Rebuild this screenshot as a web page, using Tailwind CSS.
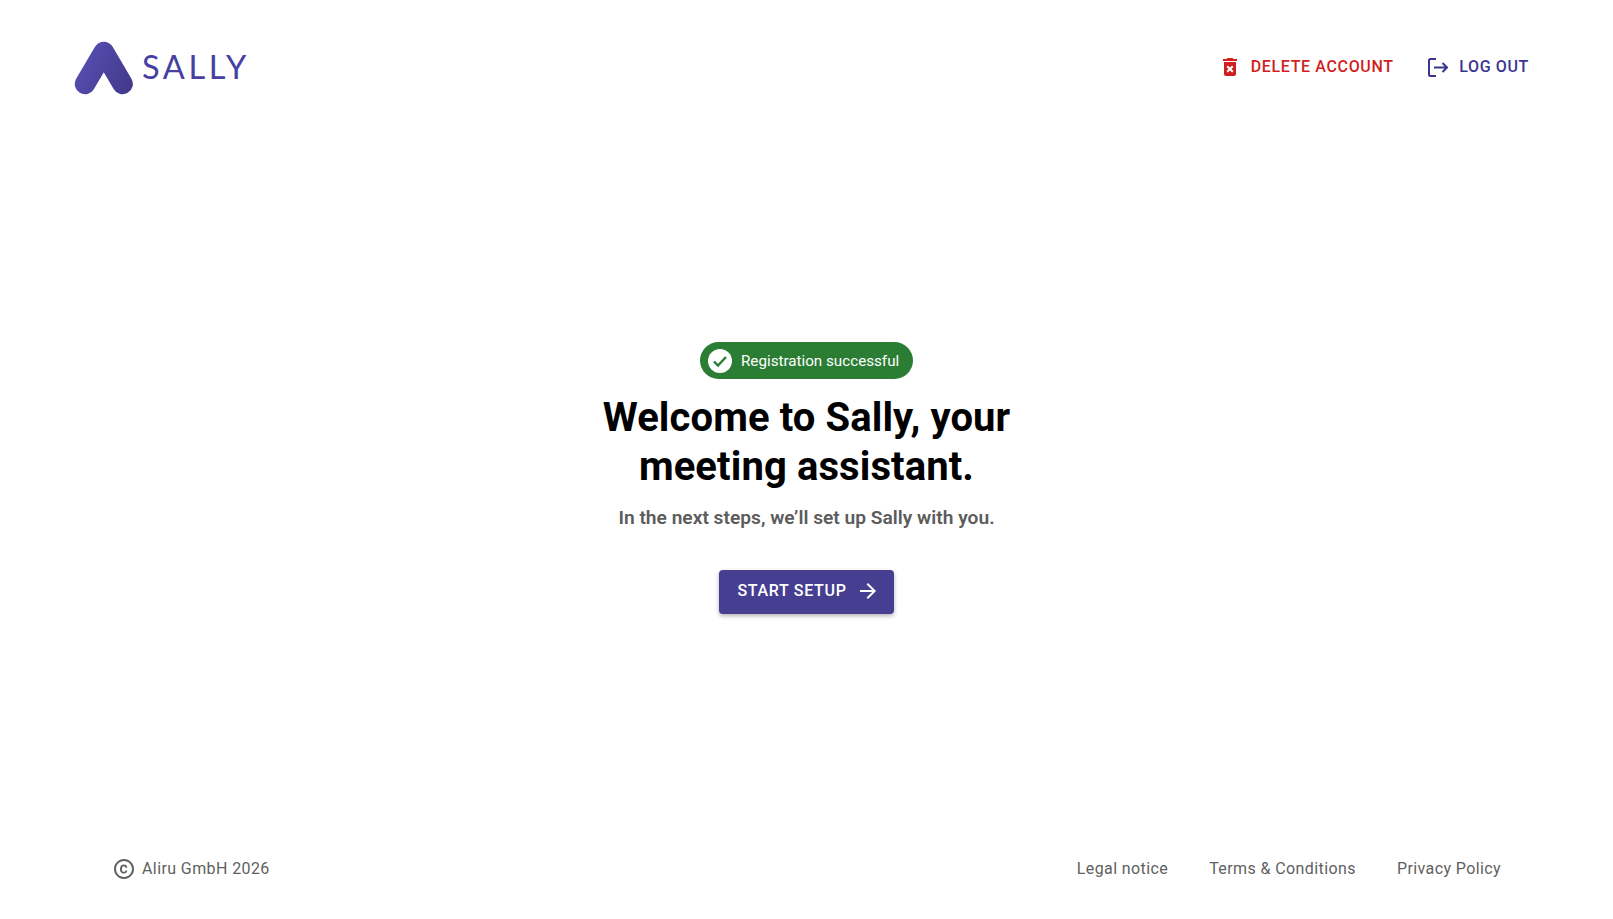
<!DOCTYPE html>
<html lang="en">
<head>
<meta charset="utf-8">
<title>Sally</title>
<script src="https://cdn.jsdelivr.net/npm/@tailwindcss/browser@4"></script>
</head>
<body class="bg-white font-['Roboto',sans-serif]">
<div class="flex flex-col h-[919px] w-full overflow-hidden">
  <header class="flex items-start justify-between pl-[74px] pr-[84px] pt-[41px] h-[130px] shrink-0">
    <div class="flex items-center gap-[8px] h-[54px]">
      <svg width="60" height="54" viewBox="0 0 60 54" fill="none">
        <defs>
          <linearGradient id="g" x1="0" y1="0" x2="60" y2="30" gradientUnits="userSpaceOnUse">
            <stop offset="0" stop-color="#5a52b8"/>
            <stop offset="1" stop-color="#443b8e"/>
          </linearGradient>
        </defs>
        <path d="M11 43 L29.800 11 L48.600 43" stroke="url(#g)" stroke-width="20.500" stroke-linecap="round" stroke-linejoin="round"/>
      </svg>
      <span class="font-['Lato',sans-serif] text-[32.5px] leading-none tracking-[3.6px] text-[#4640a3] font-normal mt-[-2px]">SALLY</span>
    </div>
    <nav class="flex items-center gap-[34.5px] h-[28px] mt-[12px] text-[16px] font-medium tracking-[0.65px] uppercase">
      <a class="flex items-center gap-[8px] text-[#d11f1f]">
        <svg width="24" height="24" viewBox="0 0 24 24" fill="currentColor" class="mx-[-4px] mr-[1px]"><path d="M6 19c0 1.100.9 2 2 2h8c1.100 0 2-.9 2-2V7H6v12zm2.460-7.120 1.410-1.410L12 12.590l2.120-2.120 1.410 1.410L13.410 14l2.120 2.120-1.410 1.410L12 15.410l-2.120 2.120-1.410-1.410L10.590 14l-2.130-2.120zM15.500 4l-1-1h-5l-1 1H5v2h14V4z"/></svg>
        <span>Delete account</span>
      </a>
      <a class="flex items-center gap-[11px] text-[#3c3590]">
        <svg width="20" height="19" viewBox="0 0 20 19" fill="none" stroke="currentColor" stroke-width="2"><path d="M8 1H2.500A1.500 1.500 0 0 0 1 2.500v14A1.500 1.500 0 0 0 2.500 18H8"/><path d="M6 9.500h13M14.500 5 19 9.500 14.500 14"/></svg>
        <span>Log out</span>
      </a>
    </nav>
  </header>
  <main class="flex-1 flex flex-col items-center pt-[212px]">
    <div class="flex items-center gap-[9px] h-[37px] w-[213px] pl-[8px] rounded-full bg-[#2a7d33] text-white text-[15.2px]">
      <svg width="24" height="24" viewBox="0 0 24 24"><circle cx="12" cy="12" r="12" fill="#fff"/><path d="M6 12.500l4 4 8-8.500" fill="none" stroke="#2a7d33" stroke-width="2.400"/></svg>
      <span class="pt-[2px]">Registration successful</span>
    </div>
    <h1 class="mt-[14px] text-center text-[40px] tracking-[0.1px] leading-[49px] font-bold text-black">Welcome to Sally, your<br>meeting assistant.</h1>
    <p class="mt-[13px] text-[19.2px] leading-[28px] font-semibold text-[#5c5c5c]">In the next steps, we’ll set up Sally with you.</p>
    <button class="mt-[38px] flex items-center justify-center gap-[9px] w-[175px] h-[44px] pl-[4px] pb-[2px] rounded-[4px] bg-[#463e91] text-white text-[16px] font-medium tracking-[0.7px] uppercase shadow-[0_2px_4px_rgba(0,0,0,0.3)]">
      <span>Start setup</span>
      <svg width="24" height="24" viewBox="0 0 24 24" fill="currentColor"><path d="M12 4l-1.410 1.410L16.170 11H4v2h12.170l-5.580 5.590L12 20l8-8z"/></svg>
    </button>
  </main>
  <footer class="flex items-center justify-between pl-[112px] pr-[112px] h-[60px] mb-[20px] shrink-0 text-[16px] tracking-[0.4px] text-[#5f5f5f]">
    <div class="flex items-center gap-[6px]">
      <svg width="24" height="24" viewBox="0 0 24 24" fill="currentColor"><path d="M11.880 9.140c1.280.06 1.610 1.150 1.630 1.660h1.790c-.08-1.980-1.490-3.190-3.450-3.190C9.640 7.610 8 9 8 12.140c0 1.940.93 4.240 3.840 4.240 2.220 0 3.410-1.650 3.440-2.950h-1.790c-.03.59-.45 1.380-1.630 1.440-1.310-.04-1.860-1.060-1.860-2.730 0-2.890 1.280-2.980 1.880-3zM12 2C6.480 2 2 6.480 2 12s4.480 10 10 10 10-4.480 10-10S17.520 2 12 2zm0 18c-4.410 0-8-3.590-8-8s3.590-8 8-8 8 3.590 8 8-3.590 8-8 8z"/></svg>
      <span>Aliru GmbH 2026</span>
    </div>
    <div class="flex items-center gap-[41px]">
      <a>Legal notice</a>
      <a>Terms &amp; Conditions</a>
      <a>Privacy Policy</a>
    </div>
  </footer>
</div>
</body>
</html>
